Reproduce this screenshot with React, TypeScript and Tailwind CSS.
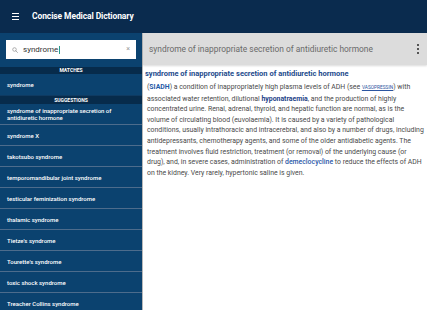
export default function App() {
  const items: string[][] = [
    ["syndrome of inappropriate secretion of", "antidiuretic hormone"],
    ["syndrome X"],
    ["takotsubo syndrome"],
    ["temporomandibular joint syndrome"],
    ["testicular feminization syndrome"],
    ["thalamic syndrome"],
    ["Tietze's syndrome"],
    ["Tourette's syndrome"],
    ["toxic shock syndrome"],
    ["Treacher Collins syndrome"],
  ];
  return (
    <div className="w-[427px] h-[310px] overflow-hidden flex flex-col bg-white [font-family:Roboto,'Noto_Sans',sans-serif]">
      <header className="h-[33px] shrink-0 bg-[#0a2b4e] flex items-center">
        <div className="ml-[12px] w-[7px] flex flex-col gap-[1.6px]">
          <div className="h-[1.2px] bg-white" />
          <div className="h-[1.2px] bg-white" />
          <div className="h-[1.2px] bg-white" />
        </div>
        <span className="ml-[13px] text-white font-bold text-[8.5px] tracking-[-0.1px]">
          Concise Medical Dictionary
        </span>
      </header>
      <div className="flex flex-1 min-h-0">
        <aside className="w-[142px] shrink-0 bg-[#0b426f] flex flex-col overflow-hidden">
          <div className="mx-[6px] mt-[7px] h-[19px] shrink-0 bg-white flex items-center pl-[6px] pr-[6px]">
            <svg width="6" height="6" viewBox="0 0 12 12" className="shrink-0">
              <circle cx="5" cy="5" r="3.6" fill="none" stroke="#8a8a8a" strokeWidth="1.3" />
              <path d="M7.6 7.6 L11 11" stroke="#8a8a8a" strokeWidth="1.4" strokeLinecap="round" />
            </svg>
            <span className="ml-[5px] text-[8px] text-[#333]">syndrome</span>
            <span className="w-[1px] h-[8px] bg-[#2a9a8a] ml-[0.5px]" />
            <span className="ml-auto text-[7px] leading-none text-[#9a9a9a]">×</span>
          </div>
          <div className="mt-[8px] h-[7px] shrink-0 bg-[#072b4b] flex items-center justify-center text-white font-bold text-[5px] leading-none">
            MATCHES
          </div>
          <div className="h-[21px] shrink-0 flex items-center pl-[7px] text-white font-medium text-[6px]">
            syndrome
          </div>
          <div className="h-[9px] shrink-0 bg-[#072b4b] border-t border-[#0f3a61] flex items-center justify-center text-white font-bold text-[5px] leading-none">
            SUGGESTIONS
          </div>
          {items.map((lines, i) => (
            <div
              key={i}
              className="h-[21px] shrink-0 flex flex-col justify-center pl-[7px] border-b border-[#4d6c8c] text-white font-medium text-[6px] leading-[7px]"
            >
              {lines.map((l, j) => (
                <div key={j} className="whitespace-nowrap">{l}</div>
              ))}
            </div>
          ))}
        </aside>
        <main className="flex-1 min-w-0 flex flex-col border-l border-[#b8b8b8]">
          <div className="h-[32px] shrink-0 bg-[#dcdcdc] flex items-center pl-[6px] pr-[8px] shadow-[0_1px_2px_rgba(0,0,0,0.15)]">
            <span className="text-[8.4px] text-[#6a6a6a] whitespace-nowrap">
              syndrome of inappropriate secretion of antidiuretic hormone
            </span>
            <div className="ml-auto flex flex-col gap-[2.4px]">
              <div className="w-[2px] h-[2px] bg-[#555]" />
              <div className="w-[2px] h-[2px] bg-[#555]" />
              <div className="w-[2px] h-[2px] bg-[#555]" />
            </div>
          </div>
          <div className="pl-[2px] pt-[4px]">
            <div className="text-[7.5px] font-bold text-[#1c4a8c] leading-[10px] whitespace-nowrap">
              syndrome of inappropriate secretion of antidiuretic hormone
            </div>
            <div className="pl-[2px] mt-[3px] text-[6.9px] leading-[10.6px] text-[#4a4a4a] whitespace-nowrap">
              <div>
                (<span className="font-bold text-[#1f5aa6]">SIADH</span>) a condition of inappropriately high plasma levels of ADH (see{" "}
                <span className="text-[4.8px] underline text-[#2b55a0]">VASOPRESSIN</span>) with
              </div>
              <div>
                associated water retention, dilutional{" "}
                <span className="font-bold text-[#1d3f88]">hyponatraemia</span>, and the production of highly
              </div>
              <div>concentrated urine. Renal, adrenal, thyroid, and hepatic function are normal, as is the</div>
              <div>volume of circulating blood (euvolaemia). It is caused by a variety of pathological</div>
              <div>conditions, usually intrathoracic and intracerebral, and also by a number of drugs, including</div>
              <div>antidepressants, chemotherapy agents, and some of the older antidiabetic agents. The</div>
              <div>treatment involves fluid restriction, treatment (or removal) of the underlying cause (or</div>
              <div>
                drug), and, in severe cases, administration of{" "}
                <span className="font-medium text-[#2a58a8]">demeclocycline</span> to reduce the effects of ADH
              </div>
              <div>on the kidney. Very rarely, hypertonic saline is given.</div>
            </div>
          </div>
        </main>
      </div>
    </div>
  );
}
